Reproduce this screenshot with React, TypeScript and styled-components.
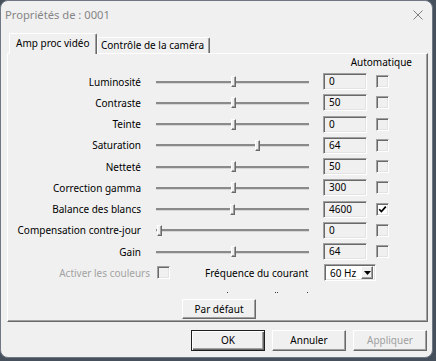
import React from "react";
import styled, { createGlobalStyle } from "styled-components";

const GlobalStyle = createGlobalStyle`
  html, body {
    margin: 0;
    padding: 0;
    width: 436px;
    height: 361px;
    overflow: hidden;
    background: #46505c;
  }
  body {
    font-family: "Noto Sans", "DejaVu Sans", sans-serif;
    font-size: 10px;
    color: #000;
  }
`;

interface Setting {
  label: string;
  value: string;
  pos: number;
  auto?: boolean;
}

const settings: Setting[] = [
  { label: "Luminosité", value: "0", pos: 0.5 },
  { label: "Contraste", value: "50", pos: 0.5 },
  { label: "Teinte", value: "0", pos: 0.5 },
  { label: "Saturation", value: "64", pos: 0.66 },
  { label: "Netteté", value: "50", pos: 0.5 },
  { label: "Correction gamma", value: "300", pos: 0.5 },
  { label: "Balance des blancs", value: "4600", pos: 0.49, auto: true },
  { label: "Compensation contre-jour", value: "0", pos: 0 },
  { label: "Gain", value: "64", pos: 0.5 },
];

const App = () => {
  return (
    <>
      <GlobalStyle />
      <Window>
        <TitleBar>
          <Title>Propriétés de : 0001</Title>
          <svg width="10" height="10" viewBox="0 0 10 10">
            <path d="M0.5 0.5 L9.5 9.5 M9.5 0.5 L0.5 9.5" stroke="#7f7f7f" strokeWidth="1" />
          </svg>
        </TitleBar>

        <TabStrip>
          <Tab $active $width={88} $pad={6}>Amp proc vidéo</Tab>
          <Tab $width={113} $pad={3}>Contrôle de la caméra</Tab>
        </TabStrip>

        <Panel>
          <HeaderRow>Automatique</HeaderRow>
          {settings.map((s) => (
            <Row key={s.label}>
              <Label>{s.label}</Label>
              <Slider>
                <Track />
                <Thumb style={{ left: 4 + s.pos * 148 }} />
              </Slider>
              <ValueBox>{s.value}</ValueBox>
              <Check $checked={s.auto}>
                {s.auto && (
                  <svg width="9" height="9" viewBox="0 0 9 9">
                    <path d="M1.2 4.2 L3.4 6.6 L7.8 1.6" stroke="#000" strokeWidth="1.7" fill="none" />
                  </svg>
                )}
              </Check>
            </Row>
          ))}
          <Row>
            <Label $disabled $width={142}>Activer les couleurs</Label>
            <Check $gap={7} />
            <FreqLabel>Fréquence du courant</FreqLabel>
            <Dropdown>
              <span>60 Hz</span>
              <ArrowButton>
                <svg width="7" height="4" viewBox="0 0 7 4">
                  <path d="M0 0 H7 L3.5 4 Z" fill="#000" />
                </svg>
              </ArrowButton>
            </Dropdown>
          </Row>
          <Marks>
            <Mark $at={219} />
            <Mark $at={47} />
            <Mark $at={1} />
            <Mark $at={29} />
          </Marks>
          <DefaultButton>Par défaut</DefaultButton>
        </Panel>

        <ButtonBar>
          <Button $default>OK</Button>
          <Button>Annuler</Button>
          <Button $disabled>Appliquer</Button>
        </ButtonBar>
      </Window>
    </>
  );
};

const Window = styled.div`
  width: 433px;
  height: 358px;
  box-sizing: border-box;
  border: 1px solid #6f7884;
  border-radius: 8px;
  background: #f0f0f0;
  display: flex;
  flex-direction: column;
  padding: 0 4px 0 6px;
  overflow: hidden;
`;

const TitleBar = styled.div`
  height: 27px;
  margin: 0 -4px 0 -6px;
  padding: 0 9px 0 4px;
  display: flex;
  align-items: center;
  justify-content: space-between;
  flex: none;
`;

const Title = styled.span`
  font-size: 11.2px;
  color: #858585;
`;

const TabStrip = styled.div`
  margin-top: 5px;
  margin-bottom: -1px;
  height: 21px;
  padding-left: 2px;
  display: flex;
  align-items: flex-start;
  flex: none;
`;

const Tab = styled.div<{ $active?: boolean; $width: number; $pad: number }>`
  position: relative;
  z-index: ${(p) => (p.$active ? 1 : 0)};
  box-sizing: border-box;
  width: ${(p) => p.$width}px;
  height: ${(p) => (p.$active ? 21 : 16)}px;
  margin-top: ${(p) => (p.$active ? 0 : 4)}px;
  padding-left: ${(p) => p.$pad}px;
  background: #f0f0f0;
  border: 1px solid;
  border-color: #ffffff #696969 transparent #ffffff;
  border-bottom: 0;
  border-radius: 2px 2px 0 0;
  box-shadow: inset -1px 0 #a0a0a0;
  line-height: ${(p) => (p.$active ? 19 : 15)}px;
  white-space: nowrap;
`;

const Panel = styled.div`
  height: 269px;
  box-sizing: border-box;
  border: 1px solid;
  border-color: #ffffff #696969 #696969 #ffffff;
  box-shadow: inset -1px -1px #a0a0a0;
  display: flex;
  flex-direction: column;
  flex: none;
`;

const HeaderRow = styled.div`
  height: 17px;
  line-height: 17px;
  text-align: right;
  padding-right: 15px;
`;

const Row = styled.div`
  height: 21.25px;
  display: flex;
  align-items: center;
`;

const Label = styled.div<{ $disabled?: boolean; $width?: number }>`
  width: ${(p) => p.$width ?? 133}px;
  flex: none;
  text-align: right;
  white-space: nowrap;
  color: ${(p) => (p.$disabled ? "#a3a3a3" : "#000")};
`;

const Slider = styled.div`
  position: relative;
  margin-left: 12px;
  width: 159px;
  height: 21px;
  box-sizing: border-box;
  padding: 0 3px;
  display: flex;
  align-items: center;
  flex: none;
`;

const Track = styled.div`
  flex: 1;
  height: 2px;
  background: #8a8a8a;
  border-bottom: 1px solid #d6d6d6;
  margin-top: 1px;
`;

const Thumb = styled.div`
  position: absolute;
  top: 5px;
  width: 5px;
  height: 11px;
  box-sizing: border-box;
  background: #f0f0f0;
  border: 1px solid;
  border-color: #ffffff #696969 #696969 #ffffff;
  box-shadow: inset -1px -1px #a0a0a0;
`;

const sunken = `
  box-sizing: border-box;
  border: 1px solid;
  border-color: #a0a0a0 #ffffff #ffffff #a0a0a0;
  box-shadow: inset 1px 1px #696969, inset -1px -1px #e3e3e3;
`;

const raised = `
  box-sizing: border-box;
  border: 1px solid;
  border-color: #ffffff #696969 #696969 #ffffff;
  box-shadow: inset -1px -1px #a0a0a0, inset 1px 1px #f0f0f0;
  background: #f0f0f0;
`;

const ValueBox = styled.div`
  ${sunken}
  margin-left: 11px;
  width: 44px;
  height: 17px;
  padding-left: 5px;
  line-height: 14px;
  background: #f0f0f0;
  flex: none;
`;

const Check = styled.div<{ $checked?: boolean; $gap?: number }>`
  ${sunken}
  margin-left: ${(p) => p.$gap ?? 9}px;
  width: 13px;
  height: 13px;
  background: ${(p) => (p.$checked ? "#ffffff" : "#f0f0f0")};
  display: flex;
  align-items: center;
  justify-content: center;
  flex: none;
`;

const FreqLabel = styled.div`
  margin-left: 35px;
  width: 107px;
  white-space: nowrap;
  flex: none;
`;

const Dropdown = styled.div`
  ${sunken}
  margin-left: 12px;
  width: 52px;
  height: 17px;
  background: #ffffff;
  display: flex;
  align-items: center;
  justify-content: space-between;
  padding: 0 2px 0 5px;
  flex: none;
`;

const ArrowButton = styled.div`
  ${raised}
  width: 12px;
  height: 13px;
  display: flex;
  align-items: center;
  justify-content: center;
`;

const Marks = styled.div`
  height: 15px;
  display: flex;
  align-items: center;
  padding-top: 3px;
  box-sizing: border-box;
`;

const Mark = styled.span<{ $at: number }>`
  margin-left: ${(p) => p.$at}px;
  width: 1px;
  height: 1px;
  background: #3a3a3a;
`;

const DefaultButton = styled.div`
  ${raised}
  align-self: center;
  margin-left: 3px;
  width: 74px;
  height: 20px;
  line-height: 18px;
  text-align: center;
`;

const ButtonBar = styled.div`
  margin-top: 8px;
  padding-right: 1px;
  display: flex;
  justify-content: flex-end;
  gap: 7px;
`;

const Button = styled.div<{ $default?: boolean; $disabled?: boolean }>`
  ${raised}
  width: 74px;
  height: 21px;
  line-height: 19px;
  text-align: center;
  color: ${(p) => (p.$disabled ? "#a0a0a0" : "#000")};
  ${(p) =>
    p.$default &&
    `
    border-color: #1e1e1e;
    box-shadow: inset 1px 1px #ffffff, inset -1px -1px #696969, inset -2px -2px #a0a0a0;
  `}
`;

export default App;
